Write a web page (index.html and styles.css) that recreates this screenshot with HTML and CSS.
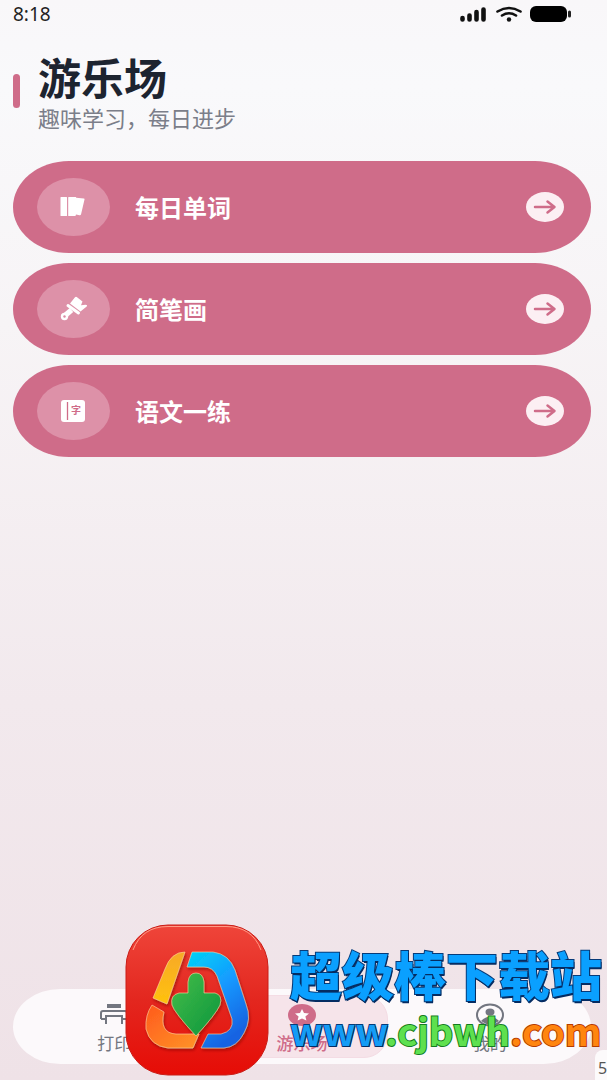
FILE: index.html
```html
<!DOCTYPE html>
<html lang="zh-CN">
<head>
<meta charset="utf-8">
<meta name="viewport" content="width=device-width, initial-scale=1">
<title>游乐场</title>
<link rel="stylesheet" href="styles.css">
</head>
<body>
<div class="screen">
  <div class="status">
    <span>8:18</span>
    <svg class="status-icons" width="112" height="18" viewBox="0 0 112 18" aria-hidden="true">
      <path d="M3.500 14v1.500M10.500 11.500v4M17.500 8v7.500M24.500 5.500V15.500" stroke="#111" stroke-width="4.600" stroke-linecap="round"/>
      <path d="M38.500 7.500q11.500-7 23 0M43 11.500q7-4.500 14 0" fill="none" stroke="#111" stroke-width="2.600" stroke-linecap="round"/>
      <circle cx="50" cy="15.500" r="2.200" fill="#111"/>
      <rect x="71" y="2" width="37" height="16" rx="6" fill="#000"/>
      <rect x="109" y="6.500" width="3" height="7" rx="1.500" fill="#222"/>
    </svg>
  </div>
  <header class="header">
    <span class="accent"></span>
    <div>
      <h1 class="title">游乐场</h1>
      <p class="subtitle">趣味学习，每日进步</p>
    </div>
  </header>
  <main class="cards">
    <button class="card" type="button">
      <span class="card-icon">
        <svg width="28" height="24" viewBox="0 0 28 24" aria-hidden="true"><path d="M.5 2.500q0-.5.5-.5H6.500q.5 0 .5.500v18q0 .5-.5.500H1q-.5 0-.5-.500zM8.200 2.500q0-.5.5-.5h7q.5 0 .5.800l7.600.700q1 .2.700 1L21 19.500q-.4 1-1.500.700L16 19.500q-.2 1.500-1 1.500H8.700q-.5 0-.5-.500z" fill="#fff"/></svg>
      </span>
      <span class="card-label">每日单词</span>
      <span class="card-go"><svg width="24" height="16" viewBox="0 0 24 16" aria-hidden="true"><path d="M2 8h19M14.500 2.500l7 5.500-7 5.500"/></svg></span>
    </button>
    <button class="card" type="button">
      <span class="card-icon">
        <svg width="28" height="26" viewBox="0 0 28 26" aria-hidden="true"><path d="M10 7.500 15 1.200q.8-.8 1.700-.2L22.500 5.500 21 9.300 25.500 8.800q2.300.2 1.200 1.800L20.500 15.500z" fill="#fff"/><path d="M8 9.500 18.500 17" stroke="#fff" stroke-width="3" stroke-linecap="round"/><path d="M11.500 14 5 19.500" stroke="#fff" stroke-width="5.500"/><circle cx="4.500" cy="20.500" r="3.700" fill="#fff"/><circle cx="4.500" cy="20.500" r="1.200" fill="#d98ca4"/></svg>
      </span>
      <span class="card-label">简笔画</span>
      <span class="card-go"><svg width="24" height="16" viewBox="0 0 24 16" aria-hidden="true"><path d="M2 8h19M14.500 2.500l7 5.500-7 5.500"/></svg></span>
    </button>
    <button class="card" type="button">
      <span class="card-icon">
        <svg width="26" height="24" viewBox="0 0 26 24" aria-hidden="true"><rect x="0" y="1" width="24" height="22" rx="3" fill="#fff"/><path d="M6.500 3v18" stroke="#cf6c89" stroke-width="1.300"/><text class="glyph" x="10" y="15">字</text></svg>
      </span>
      <span class="card-label">语文一练</span>
      <span class="card-go"><svg width="24" height="16" viewBox="0 0 24 16" aria-hidden="true"><path d="M2 8h19M14.500 2.500l7 5.500-7 5.500"/></svg></span>
    </button>
  </main>
  <nav class="tabs">
    <a class="tab" href="#print">
      <svg width="30" height="24" viewBox="0 0 30 24" aria-hidden="true"><rect x="8" y="1" width="14" height="4" fill="#737680"/><path d="M2 16V10q0-2 2-2h22q2 0 2 2v6h-4M2 16h4M7 21v-8h16v8" fill="none" stroke="#737680" stroke-width="2"/></svg>
      <span>打印</span>
    </a>
    <a class="tab tab-active" href="#play">
      <svg width="30" height="24" viewBox="0 0 30 24" aria-hidden="true"><ellipse cx="15" cy="12" rx="14" ry="11" fill="#cf6c89"/><path d="M15 6l2 4 5 .5-3.600 2.900 1 4.100L15 15.500l-4.400 2 1-4.100L8 10.500l5-.5z" fill="#fff"/></svg>
      <span>游乐场</span>
    </a>
    <a class="tab" href="#me">
      <svg width="30" height="24" viewBox="0 0 30 24" aria-hidden="true"><ellipse cx="15" cy="12" rx="13" ry="10.500" fill="none" stroke="#737680" stroke-width="2"/><ellipse cx="15" cy="9" rx="4.500" ry="3.500" fill="#737680"/><path d="M6 18q9-9 18 0-9 7-18 0z" fill="#737680"/></svg>
      <span>我的</span>
    </a>
  </nav>
  <div class="brand">
    <svg class="brand-logo" width="144" height="152" viewBox="0 0 144 152" aria-hidden="true">
      <defs>
        <linearGradient id="red" x1="0" y1="0" x2="0" y2="1"><stop offset="0" stop-color="#ef453a"/><stop offset=".5" stop-color="#e3271f"/><stop offset="1" stop-color="#e60c06"/></linearGradient>
        <linearGradient id="blue" x1="0" y1="0" x2=".5" y2="1"><stop offset="0" stop-color="#00d4f5"/><stop offset=".5" stop-color="#159aff"/><stop offset="1" stop-color="#1763e2"/></linearGradient>
        <linearGradient id="gold" x1="0" y1="0" x2="0" y2="1"><stop offset="0" stop-color="#f7a928"/><stop offset="1" stop-color="#ffc20d"/></linearGradient>
        <linearGradient id="orange" x1="0" y1="0" x2="1" y2="1"><stop offset="0" stop-color="#ff5a1d"/><stop offset="1" stop-color="#ff9427"/></linearGradient>
        <linearGradient id="green" x1="0" y1="0" x2="1" y2="1"><stop offset="0" stop-color="#45bd48"/><stop offset="1" stop-color="#0b953e"/></linearGradient>
        <filter id="drop" x="-20%" y="-20%" width="140%" height="140%"><feDropShadow dx="1" dy="2" stdDeviation="1.500" flood-color="#8e0800" flood-opacity=".7"/></filter>
      </defs>
      <rect x="1" y="1" width="142" height="150" rx="42" fill="url(#red)" stroke="#ca1c16"/>
      <path d="M8 26Q17 2.500 43 2.500h58q26 0 35 23.500" fill="none" stroke="#ff9a86" stroke-width="1"/>
      <g filter="url(#drop)" stroke="#ffd7a3" stroke-width=".6">
        <path d="M60 28 42 80 28 74 40 45Q46 28 60 28z" fill="url(#gold)"/>
        <path d="M67 28H88Q104 30 110 46L121 80Q127 95 119 109 112 123 99 124H76L83 110H96Q109 107 107 95L92 52Q88 43 79 43H62z" fill="url(#blue)"/>
        <path d="M27 81 39 88Q34 109 51 110H74L68 124H43Q25 122 21 105 20 91 27 81z" fill="url(#orange)"/>
        <path d="M63 58Q64 49 71 49T79 58V69H90Q98 71 95 81 91 90 71 112 49 88 47 81 45 71 54 69H63z" fill="url(#green)"/>
      </g>
    </svg>
    <div class="brand-text">
      <div class="brand-name">超级棒下载站</div>
      <div class="brand-site"><span class="site-www">www</span><span class="site-mid">.cjbwh</span><span class="site-com">.com</span></div>
    </div>
  </div>
  <div class="corner">5</div>
</div>
</body>
</html>
```
FILE: styles.css
```css
* { box-sizing: border-box; }
body {
  margin: 0;
  font-family: "Noto Sans", "Noto Sans CJK SC", sans-serif;
}
.screen {
  position: relative;
  display: flex;
  flex-direction: column;
  min-height: 100vh;
  padding: 0 16px 16px 13px;
  overflow: hidden;
  background: linear-gradient(#f9f7f9 0%, #f9f9fb 8%, #f7f4f6 30%, #f2e9ed 65%, #efe2e7 100%);
}
.status {
  display: flex;
  justify-content: space-between;
  align-items: center;
  height: 28px;
  padding-right: 20px;
  font-size: 19px;
  color: #222;
}
.status-icons { margin-top: -2px; }
.header {
  display: flex;
  align-items: center;
  gap: 18px;
  height: 125px;
}
.accent {
  width: 7px;
  height: 34px;
  border-radius: 4px;
  background: #cf6c89;
}
.title {
  margin: 0;
  font: 700 43px/52px "Noto Sans CJK SC", sans-serif;
  color: #1d2430;
}
.subtitle {
  margin: 0;
  font: 400 22px/30px "Noto Sans CJK SC", sans-serif;
  color: #7b7e89;
}
.cards {
  display: flex;
  flex-direction: column;
  gap: 10px;
  margin-top: 8px;
}
.card {
  display: flex;
  align-items: center;
  gap: 25px;
  height: 92px;
  padding: 0 27px 0 24px;
  border: 0;
  border-radius: 56px / 46px;
  background: #cf6c89;
  color: #fff;
}
.card-icon {
  display: grid;
  place-items: center;
  width: 73px;
  height: 58px;
  border-radius: 50%;
  background: #dd91a8;
}
.card-label {
  flex: 1;
  text-align: left;
  font: 700 24px/32px "Noto Sans CJK SC", sans-serif;
}
.card-go {
  display: grid;
  place-items: center;
  width: 38px;
  height: 30px;
  border-radius: 50%;
  background: #fceff3;
}
.card-go path {
  fill: none;
  stroke: #cf6c89;
  stroke-width: 2.5;
  stroke-linecap: round;
  stroke-linejoin: round;
}
.glyph {
  font: 700 10px "Noto Sans CJK SC", sans-serif;
  fill: #cf6c89;
}
.tabs {
  display: flex;
  gap: 16px;
  height: 75px;
  margin-top: auto;
  padding: 6px 16px;
  border-radius: 48px / 38px;
  background: #fcf9fb;
}
.tab {
  flex: 1;
  display: flex;
  flex-direction: column;
  align-items: center;
  justify-content: center;
  gap: 4px;
  padding-top: 4px;
  border-radius: 24px;
  font: 400 17px/24px "Noto Sans CJK SC", sans-serif;
  color: #737680;
  text-decoration: none;
}
.tab-active {
  border: 1px solid #f4dce4;
  background: #f6e4ea;
  color: #cf6c89;
  font-weight: 500;
}
.brand {
  position: absolute;
  right: 5px;
  bottom: 4px;
  display: flex;
  align-items: center;
  gap: 21px;
}
.brand-text {
  font-family: "Noto Sans CJK SC", sans-serif;
  white-space: nowrap;
}
.brand-name, .brand-site {
  -webkit-text-stroke: 2px #073b79;
  paint-order: stroke fill;
}
.brand-name {
  font-size: 52px;
  font-weight: 900;
  line-height: 60px;
  color: #0aa0ff;
  text-shadow: 1px 2px 0 #052c62;
}
.brand-site {
  font-size: 38px;
  font-weight: 700;
  line-height: 52px;
}
.site-www { color: #159cf5; text-shadow: 1px 1px 0 #052c62; }
.site-mid { color: #5ee04f; -webkit-text-stroke-color: #157a20; }
.site-com { color: #ff850f; -webkit-text-stroke-color: #b53c00; }
.corner {
  position: absolute;
  right: 0;
  bottom: 0;
  width: 12px;
  height: 30px;
  padding-left: 3px;
  overflow: hidden;
  border-radius: 8px 0 0 0;
  background: #fcfafb;
  font-size: 16px;
  line-height: 36px;
  color: #555;
}
```
